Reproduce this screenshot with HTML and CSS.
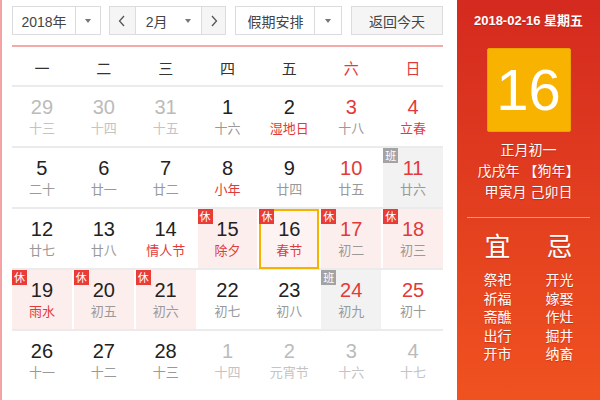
FILE: index.html
```html
<!DOCTYPE html>
<html lang="zh-CN">
<head>
<meta charset="utf-8">
<title>万年历</title>
<link rel="stylesheet" href="styles.css">
</head>
<body>
<div class="widget">
  <div class="cal">
    <div class="toolbar">
      <div class="box year">
        <span class="label">2018年</span>
        <span class="drop"><i class="tri"></i></span>
      </div>
      <div class="box month">
        <span class="nav"><svg width="8" height="12" viewBox="0 0 8 12"><polyline points="6,1 1.5,6 6,11" fill="none" stroke="#555" stroke-width="1.3"/></svg></span>
        <span class="mlabel">2月<i class="tri"></i></span>
        <span class="nav next"><svg width="8" height="12" viewBox="0 0 8 12"><polyline points="2,1 6.5,6 2,11" fill="none" stroke="#555" stroke-width="1.3"/></svg></span>
      </div>
      <div class="box holiday">
        <span class="label">假期安排</span>
        <span class="drop"><i class="tri"></i></span>
      </div>
      <div class="box today">返回今天</div>
    </div>
    <div class="redline"></div>
    <div class="week">
      <span>一</span><span>二</span><span>三</span><span>四</span><span>五</span><span class="we">六</span><span class="we">日</span>
    </div>
    <div class="grid">
      <div class="row">
        <div class="cell other"><b>29</b><em>十三</em></div>
        <div class="cell other"><b>30</b><em>十四</em></div>
        <div class="cell other"><b>31</b><em>十五</em></div>
        <div class="cell"><b>1</b><em>十六</em></div>
        <div class="cell"><b>2</b><em class="fest">湿地日</em></div>
        <div class="cell wk"><b>3</b><em>十八</em></div>
        <div class="cell wk"><b>4</b><em class="fest">立春</em></div>
      </div>
      <div class="row">
        <div class="cell"><b>5</b><em>二十</em></div>
        <div class="cell"><b>6</b><em>廿一</em></div>
        <div class="cell"><b>7</b><em>廿二</em></div>
        <div class="cell"><b>8</b><em class="fest">小年</em></div>
        <div class="cell"><b>9</b><em>廿四</em></div>
        <div class="cell wk"><b>10</b><em>廿五</em></div>
        <div class="cell wk work"><span class="tag ban">班</span><b>11</b><em>廿六</em></div>
      </div>
      <div class="row">
        <div class="cell"><b>12</b><em>廿七</em></div>
        <div class="cell"><b>13</b><em>廿八</em></div>
        <div class="cell"><b>14</b><em class="fest">情人节</em></div>
        <div class="cell rest"><span class="tag xiu">休</span><b>15</b><em class="fest">除夕</em></div>
        <div class="cell rest sel"><span class="tag xiu">休</span><b>16</b><em class="fest">春节</em></div>
        <div class="cell rest wk"><span class="tag xiu">休</span><b>17</b><em>初二</em></div>
        <div class="cell rest wk"><span class="tag xiu">休</span><b>18</b><em>初三</em></div>
      </div>
      <div class="row">
        <div class="cell rest"><span class="tag xiu">休</span><b>19</b><em class="fest">雨水</em></div>
        <div class="cell rest"><span class="tag xiu">休</span><b>20</b><em>初五</em></div>
        <div class="cell rest"><span class="tag xiu">休</span><b>21</b><em>初六</em></div>
        <div class="cell"><b>22</b><em>初七</em></div>
        <div class="cell"><b>23</b><em>初八</em></div>
        <div class="cell wk work"><span class="tag ban">班</span><b>24</b><em>初九</em></div>
        <div class="cell wk"><b>25</b><em>初十</em></div>
      </div>
      <div class="row">
        <div class="cell"><b>26</b><em>十一</em></div>
        <div class="cell"><b>27</b><em>十二</em></div>
        <div class="cell"><b>28</b><em>十三</em></div>
        <div class="cell other"><b>1</b><em>十四</em></div>
        <div class="cell other"><b>2</b><em>元宵节</em></div>
        <div class="cell other"><b>3</b><em>十六</em></div>
        <div class="cell other"><b>4</b><em>十七</em></div>
      </div>
    </div>
  </div>
  <div class="panel">
    <div class="pdate">2018-02-16 星期五</div>
    <div class="bigday">16</div>
    <div class="lunar">
      <div>正月初一</div>
      <div>戊戌年 【狗年】</div>
      <div>甲寅月 己卯日</div>
    </div>
    <div class="sep"></div>
    <div class="yiji">
      <div class="col">
        <div class="head">宜</div>
        <div>祭祀</div><div>祈福</div><div>斋醮</div><div>出行</div><div>开市</div>
      </div>
      <div class="col">
        <div class="head">忌</div>
        <div>开光</div><div>嫁娶</div><div>作灶</div><div>掘井</div><div>纳畜</div>
      </div>
    </div>
  </div>
</div>
</body>
</html>
```

FILE: styles.css
```css
* { box-sizing: border-box; }
html, body { margin: 0; padding: 0; }
body {
  width: 600px;
  height: 400px;
  overflow: hidden;
  background: #fff;
  font-family: "Liberation Sans", "Noto Sans CJK SC", Arial, sans-serif;
  color: #333;
}
.widget {
  display: flex;
  width: 600px;
  height: 400px;
}
.cal {
  width: 457px;
  flex: none;
  border-left: 2px solid #f3a3a3;
  padding: 6px 14px 0 10px;
}
.toolbar {
  display: flex;
  height: 29px;
}
.box {
  display: flex;
  align-items: center;
  height: 29px;
  border: 1px solid #dcdcdc;
  background: #fff;
  font-size: 14px;
  color: #444;
}
.year { width: 89px; }
.year .label { width: 62px; text-align: center; }
.drop {
  flex: 1;
  height: 100%;
  border-left: 1px solid #dcdcdc;
  display: flex;
  align-items: center;
  justify-content: center;
}
.tri {
  display: inline-block;
  width: 0;
  height: 0;
  border-left: 3.5px solid transparent;
  border-right: 3.5px solid transparent;
  border-top: 4px solid #777;
}
.month { width: 118px; margin-left: 8px; }
.nav {
  width: 26px;
  height: 100%;
  background: #f5f5f5;
  border-right: 1px solid #dcdcdc;
  display: flex;
  align-items: center;
  justify-content: center;
}
.nav.next { width: 24px; border-right: 0; border-left: 1px solid #dcdcdc; }
.mlabel {
  flex: 1;
  display: flex;
  align-items: center;
  justify-content: space-between;
  padding: 0 10px 0 10px;
}
.holiday { width: 107px; margin-left: 9px; }
.holiday .label { width: 78px; text-align: center; }
.today {
  width: 92px;
  margin-left: 9px;
  justify-content: center;
  background: #f5f5f5;
}
.redline {
  height: 2px;
  margin-top: 10px;
  background: #f6a9a9;
}
.week {
  display: grid;
  grid-template-columns: repeat(7, 1fr);
  column-gap: 2px;
  height: 38px;
  align-items: center;
  text-align: center;
  font-size: 15px;
  color: #333;
  padding-top: 2px;
}
.week .we { color: #e23a3a; }
.row {
  display: grid;
  grid-template-columns: repeat(7, 1fr);
  column-gap: 2px;
  height: 61px;
  border-top: 2px solid #ebebeb;
}
.cell {
  position: relative;
  text-align: center;
  padding-top: 8px;
}
.cell b {
  display: block;
  font-weight: normal;
  font-size: 20px;
  line-height: 24px;
  color: #222;
}
.cell em {
  display: block;
  font-style: normal;
  font-size: 13px;
  line-height: 18px;
  margin-top: 1px;
  color: #999;
}
.cell.wk b { color: #e23a3a; }
.cell em.fest { color: #e23a3a; }
.cell.other b { color: #bbb; }
.cell.other em { color: #c4c4c4; }
.cell.rest { background: #fdeeee; }
.cell.work { background: #f2f2f2; }
.cell.sel {
  border: 2px solid #f5b300;
  padding-top: 6px;
  margin-bottom: -1px;
  background: #fdf3f2;
}
.tag {
  position: absolute;
  left: 0;
  top: 0;
  width: 15px;
  height: 15px;
  font-size: 11px;
  line-height: 15px;
  color: #fff;
  text-align: center;
  font-family: "Noto Sans CJK SC", sans-serif;
}
.sel .tag { left: -2px; top: -2px; }
.xiu { background: #ea3b37; }
.ban { background: #a3a3a3; }
.panel {
  flex: 1;
  background: linear-gradient(#d42a1f, #f0521f);
  color: #fff;
  text-align: center;
  display: flex;
  flex-direction: column;
  align-items: center;
  text-shadow: 0 1px 1px rgba(140, 0, 0, 0.35);
}
.pdate {
  margin-top: 11px;
  font-size: 13px;
  font-weight: bold;
  line-height: 20px;
}
.bigday {
  margin-top: 17px;
  width: 84px;
  height: 84px;
  background: #f7b300;
  border: 1px solid #e9a400;
  border-radius: 2px;
  font-size: 58px;
  line-height: 82px;
  text-shadow: none;
}
.lunar {
  margin-top: 8px;
  font-size: 14px;
  line-height: 21px;
}
.sep {
  margin-top: 14px;
  width: 123px;
  height: 1px;
  background: rgba(255, 255, 255, 0.45);
}
.yiji {
  display: grid;
  grid-template-columns: 62px 62px;
  margin-top: 14px;
  font-size: 14px;
  line-height: 18.6px;
}
.head {
  font-size: 26px;
  line-height: 30px;
  margin-bottom: 9px;
}
```
